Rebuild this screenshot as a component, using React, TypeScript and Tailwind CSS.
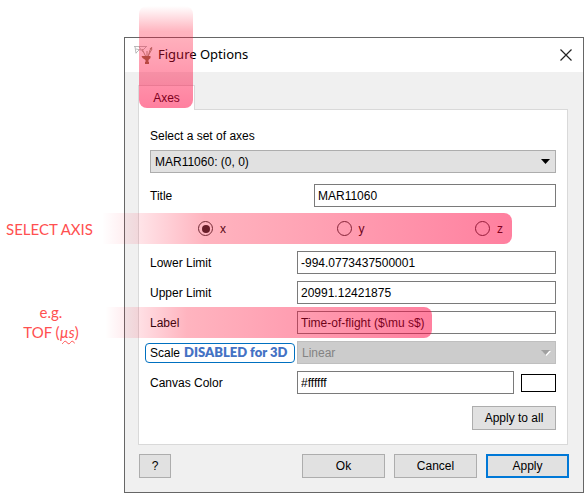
import type { ReactNode } from "react";

const button =
  "h-6 border border-[#adadad] bg-[#e1e1e1] text-center";
const field =
  "h-[23px] min-w-0 flex-1 border border-[#7a7a7a] bg-white px-[3px] outline-none";

function Highlight({ className }: { className: string }) {
  return (
    <div
      aria-hidden="true"
      className={`pointer-events-none absolute z-10 from-[#ff1a38]/0 via-[#ff1538]/32 via-25% to-[#ff003f]/50 ${className}`}
    />
  );
}

function Row({ id, label, children }: { id: string; label: ReactNode; children: ReactNode }) {
  return (
    <div className="relative flex h-[23px] items-center">
      <label htmlFor={id} className="w-[147px] shrink-0 whitespace-nowrap">
        {label}
      </label>
      {children}
    </div>
  );
}

function AppIcon() {
  return (
    <svg width="20" height="20" viewBox="0 0 20 20" fill="none" aria-hidden="true">
      <path d="M0 1.500h13M1 1.500l1 7M2 8l3-3M2 4l5 1M5 2l4 5M9 5l3-3" stroke="#a8a8a8" strokeWidth="0.8" />
      <path d="M8 4l4 8M13 12V6M14 12l2-7M14 11l4-7" stroke="#a09880" strokeWidth="1" />
      <path d="M16 4.500l2-2" stroke="#8a7a60" strokeWidth="1.2" />
      <path d="M7.500 11h9v2l-2 2v2h.5v2h-4v-2h.5v-2l-3-2z" fill="#8b6f47" />
    </svg>
  );
}

function Arrow({ className }: { className: string }) {
  return (
    <svg width="9" height="5" viewBox="0 0 9 5" aria-hidden="true" className={`pointer-events-none absolute right-[6px] top-[9px] ${className}`}>
      <path d="M0 0h9L4.500 5z" fill="currentColor" />
    </svg>
  );
}

function Axis({ name, checked }: { name: string; checked?: boolean }) {
  return (
    <label className="flex items-center gap-[7px]">
      <input
        type="radio"
        name="axis"
        defaultChecked={checked}
        className="grid size-[15px] appearance-none place-items-center rounded-full border border-[#333] bg-white before:size-2 before:rounded-full checked:before:bg-[#222]"
      />
      {name}
    </label>
  );
}

export default function App() {
  return (
    <main className="flex bg-white pr-1 pt-[37px] font-['Liberation_Sans',Arial,sans-serif] text-xs text-black">
      <aside className="w-[124px] shrink-0 pt-[182px] font-[Lato,sans-serif] text-[15px] leading-5 text-[#ff5050]">
        <p className="pl-[6px]">SELECT AXIS</p>
        <p className="mt-[63px] pr-[22px] text-center">
          e.g.
          <br />
          TOF (
          <i className="underline decoration-[#ff5050] decoration-wavy decoration-1 underline-offset-2">µs</i>)
        </p>
      </aside>

      <section className="relative min-w-0 flex-1 border border-[#666] bg-[#f0f0f0]">
        <Highlight className="-top-8 left-[14px] h-[102px] w-[54px] rounded-lg bg-linear-to-b" />
        <header className="flex h-[34px] items-center bg-white pl-[9px] pr-[11px]">
          <AppIcon />
          <h1 className="ml-1 flex-1 font-['Noto_Sans',sans-serif] text-[13px]">Figure Options</h1>
          <button aria-label="Close">
            <svg width="12" height="12" viewBox="0 0 12 12" stroke="#222" strokeWidth="1.2" aria-hidden="true">
              <path d="M.5.500l11 11M11.500.500l-11 11" />
            </svg>
          </button>
        </header>

        <div className="px-[14px] pb-[14px] pt-[13px]">
          <div className="-ml-px mr-px">
            <button className="relative -mb-px block h-[25px] w-[57px] border border-b-0 border-[#d9d9d9] bg-white text-center">
              Axes
            </button>
            <form className="border border-[#d9d9d9] bg-white px-[11px] pb-[14px] pt-[17px]" onSubmit={(e) => e.preventDefault()}>
              <label htmlFor="axes" className="block h-[23px] leading-[18px]">
                Select a set of axes
              </label>
              <div className="relative">
                <select id="axes" className="block h-[23px] w-full appearance-none border border-[#adadad] bg-[#e1e1e1] px-1">
                  <option>MAR11060: (0, 0)</option>
                </select>
                <Arrow className="text-black" />
              </div>

              <div className="mt-[11px] flex items-center">
                <label htmlFor="title" className="w-[164px] shrink-0">
                  Title
                </label>
                <input id="title" defaultValue="MAR11060" className={field} />
              </div>

              <fieldset className="relative mb-[7px] mt-[6px] flex h-[31px] items-center justify-between pl-12 pr-[53px]">
                <Highlight className="-left-12 inset-y-0 right-[44px] rounded-r-lg bg-linear-to-r" />
                <Axis name="x" checked />
                <Axis name="y" />
                <Axis name="z" />
              </fieldset>

              <div className="flex flex-col gap-[7px]">
                <Row id="lower" label="Lower Limit">
                  <input id="lower" defaultValue="-994.0773437500001" className={field} />
                </Row>
                <Row id="upper" label="Upper Limit">
                  <input id="upper" defaultValue="20991.12421875" className={field} />
                </Row>
                <Row id="label" label="Label">
                  <Highlight className="-inset-y-1 -left-[45px] w-[327px] rounded-r-lg bg-linear-to-r" />
                  <input id="label" defaultValue={"Time-of-flight ($\\mu s$)"} className={field} />
                </Row>
                <Row
                  id="scale"
                  label={
                    <span className="-ml-[5px] mr-[2px] flex h-5 items-center gap-1 rounded border border-[#0070c0] bg-white pl-1">
                      Scale
                      <strong className="font-[Lato,sans-serif] text-[13px] font-extrabold text-[#4472c4]">DISABLED for 3D</strong>
                    </span>
                  }
                >
                  <div className="relative flex-1">
                    <select id="scale" disabled className="block h-[23px] w-full appearance-none border border-[#bfbfbf] bg-[#ccc] px-1 text-[#838383] opacity-100">
                      <option>Linear</option>
                    </select>
                    <Arrow className="text-[#a0a0a0] drop-shadow-[1px_1px_0_#fff]" />
                  </div>
                </Row>
                <Row id="canvas" label="Canvas Color">
                  <input id="canvas" defaultValue="#ffffff" className={field} />
                  <button type="button" aria-label="Pick canvas color" className="ml-[7px] h-[18px] w-[35px] border border-black bg-white" />
                </Row>
              </div>

              <div className="mt-3 flex justify-end">
                <button className={`${button} w-[84px]`}>Apply to all</button>
              </div>
            </form>
          </div>

          <footer className="mt-[9px] flex gap-[9px]">
            <button className={`${button} mr-auto w-8`}>?</button>
            <button className={`${button} w-[83px]`}>Ok</button>
            <button className={`${button} w-[83px]`}>Cancel</button>
            <button className="h-6 w-[83px] border-2 border-[#0078d7] bg-[#e1e1e1]">Apply</button>
          </footer>
        </div>
      </section>
    </main>
  );
}
